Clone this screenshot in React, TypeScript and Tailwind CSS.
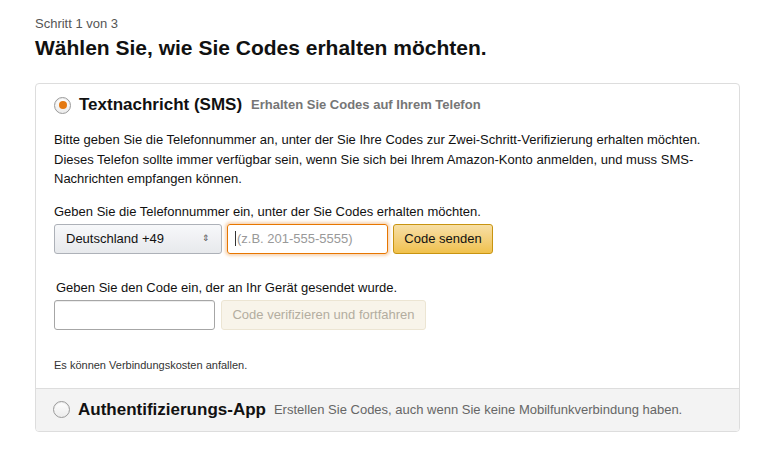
import React from "react";

const Radio = ({ checked }: { checked?: boolean }) => (
  <span className="flex h-[17px] w-[17px] shrink-0 items-center justify-center rounded-full border border-[#9a9a9a] bg-gradient-to-b from-white to-[#ececec] shadow-[inset_0_1px_1px_rgba(0,0,0,0.08)]">
    {checked && <span className="h-[8px] w-[8px] rounded-full bg-[#e47911]" />}
  </span>
);

const App = () => {
  return (
    <div
      className="h-[470px] w-[768px] bg-white px-[35px] pt-[16px] text-[#111]"
      style={{ fontFamily: '"Liberation Sans", Arial, sans-serif' }}
    >
      <div className="text-[13px] leading-[15px] text-[#555]">Schritt 1 von 3</div>
      <h1 className="mt-[4px] text-[21px] font-bold leading-[26px]">
        Wählen Sie, wie Sie Codes erhalten möchten.
      </h1>

      <div className="mt-[22px] w-[705px] overflow-hidden rounded-[4px] border border-[#dddddd]">
        <div className="px-[18px] pb-[16px] pt-[9px]">
          <div className="flex items-center gap-[8px] pl-0">
            <Radio checked />
            <span className="text-[17px] font-bold leading-[24px]">Textnachricht (SMS)</span>
            <span className="ml-[1px] text-[13px] font-bold text-[#767676]">
              Erhalten Sie Codes auf Ihrem Telefon
            </span>
          </div>

          <p className="mt-[13px] text-[13px] leading-[19.5px] text-[#111]">
            Bitte geben Sie die Telefonnummer an, unter der Sie Ihre Codes zur Zwei-Schritt-Verifizierung erhalten möchten.
            <br />
            Dieses Telefon sollte immer verfügbar sein, wenn Sie sich bei Ihrem Amazon-Konto anmelden, und muss SMS-
            <br />
            Nachrichten empfangen können.
          </p>

          <div className="mt-[14px] text-[13px] leading-[18px]">
            Geben Sie die Telefonnummer ein, unter der Sie Codes erhalten möchten.
          </div>
          <div className="mt-[3px] flex gap-[5px]">
            <div className="flex h-[30px] w-[168px] items-center justify-between rounded-[3px] border border-[#adb1b8] bg-gradient-to-b from-[#f7f8fa] to-[#e7e9ec] px-[11px] text-[13px]">
              <span>Deutschland +49</span>
              <span className="text-[9px] leading-none text-[#555]">⇕</span>
            </div>
            <div className="flex h-[30px] w-[161px] items-center rounded-[3px] border border-[#e77600] px-[7px] text-[13px] text-[#999] shadow-[0_0_3px_2px_rgba(228,121,17,0.3)]">
              <span className="mr-[1px] h-[15px] w-px bg-[#333]" />
              (z.B. 201-555-5555)
            </div>
            <button className="h-[30px] w-[100px] rounded-[3px] border border-[#c89411] bg-gradient-to-b from-[#f7dfa5] to-[#f0c14b] text-[13px] text-[#111]">
              Code senden
            </button>
          </div>

          <div className="mt-[25px] pl-[2px] text-[13px] leading-[18px]">
            Geben Sie den Code ein, der an Ihr Gerät gesendet wurde.
          </div>
          <div className="mt-[3px] flex gap-[6px]">
            <div className="h-[30px] w-[161px] rounded-[3px] border border-[#a6a6a6] bg-white shadow-[inset_0_1px_0_rgba(0,0,0,0.07)]" />
            <button className="h-[30px] w-[205px] rounded-[3px] border border-[#ece5d3] bg-[#f8f4ea] text-[13px] text-[#b3ada0]">
              Code verifizieren und fortfahren
            </button>
          </div>

          <div className="mt-[28px] text-[11px] leading-[14px] text-[#333]">
            Es können Verbindungskosten anfallen.
          </div>
        </div>

        <div className="flex h-[43px] items-center gap-[8px] border-t border-[#dddddd] bg-[#f3f3f3] px-[17px]">
          <Radio />
          <span className="text-[17px] font-bold">Authentifizierungs-App</span>
          <span className="text-[13px] text-[#666]">
            Erstellen Sie Codes, auch wenn Sie keine Mobilfunkverbindung haben.
          </span>
        </div>
      </div>
    </div>
  );
};

export default App;
